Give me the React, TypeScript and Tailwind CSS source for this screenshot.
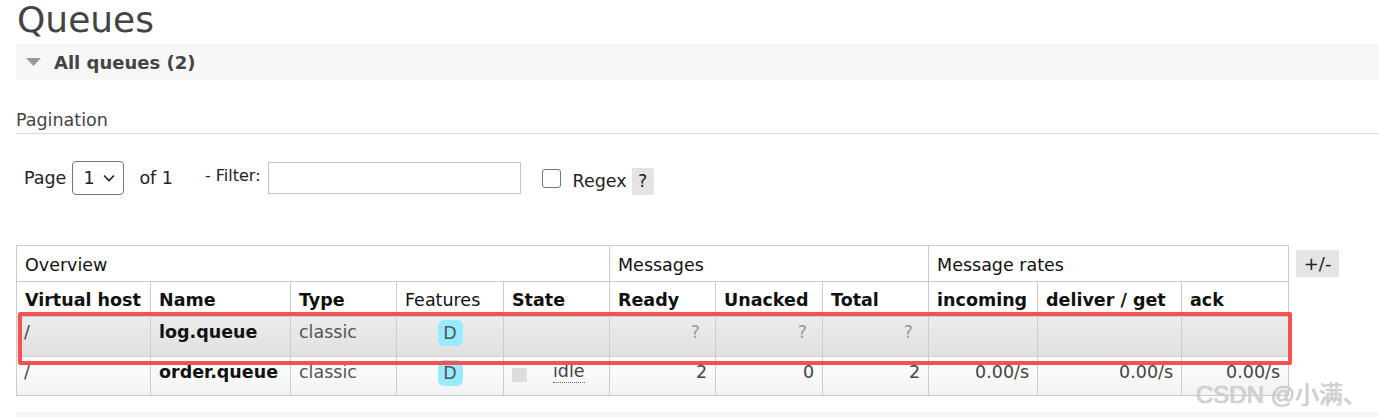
import React from 'react';

const cols = [134, 140, 106, 107, 106, 106, 107, 106, 109, 144, 107];

const Badge = () => (
  <span className="inline-flex h-[26px] w-[25px] items-center justify-center rounded-[6px] bg-[#99ebff] text-[#555]">D</span>
);

const App = () => {
  return (
    <div className="relative h-[417px] w-[1379px] overflow-hidden bg-white pl-4 font-['DejaVu_Sans',sans-serif] text-[17.5px] text-[#222]">
      <h1 className="h-[44px] pl-[1px] text-[36px] leading-[40px] font-normal text-[#444]">Queues</h1>

      <div className="flex h-[36px] items-center bg-[#f7f7f7]">
        <svg width="15" height="8" viewBox="0 0 15 8" className="ml-[10px]">
          <polygon points="0,0 15,0 7.5,8" fill="#999" />
        </svg>
        <span className="ml-[13px] mt-[1px] text-[18px] font-bold text-[#444]">All queues (2)</span>
      </div>

      <div className="flex h-[54px] items-end border-b border-[#dddddd] pb-[1px]">
        <span className="leading-[24px] text-[#444]">Pagination</span>
      </div>

      <div className="mt-[27px] flex h-[34px] items-center text-[17.5px] text-[#222]">
        <span className="ml-2">Page</span>
        <div className="ml-[6px] flex h-[34px] w-[52px] items-center rounded-[4px] border border-[#767676] pl-[10px]">
          <span>1</span>
          <svg width="12" height="8" viewBox="0 0 12 8" className="ml-[8px]">
            <path d="M1 1.5 L6 6.5 L11 1.5" fill="none" stroke="#222" strokeWidth="1.6" />
          </svg>
        </div>
        <span className="ml-[15px]">of 1</span>
        <span className="ml-[32px] -mt-[4px] text-[16px]">- Filter:</span>
        <div className="ml-[7px] h-[32px] w-[253px] border border-[#c4c4c4]" />
        <div className="ml-[21px] h-[19px] w-[19px] rounded-[3px] border border-[#767676]" />
        <span className="ml-[12px] mt-[6px]">Regex</span>
        <span className="ml-[5px] mt-[6px] flex h-[27px] w-[22px] items-center justify-center bg-[#e4e4e4]">?</span>
      </div>

      <div className="mt-[50px] flex items-start gap-[7px]">
        <table className="table-fixed border-collapse border border-[#cccccc]" style={{ width: 1272 }}>
          <colgroup>
            {cols.map((w, i) => (
              <col key={i} style={{ width: w }} />
            ))}
          </colgroup>
          <thead>
            <tr className="h-[36px]">
              <th colSpan={5} className="border border-[#cccccc] px-2 pt-[3px] text-left font-normal text-[#111]">Overview</th>
              <th colSpan={3} className="border border-[#cccccc] px-2 pt-[3px] text-left font-normal text-[#111]">Messages</th>
              <th colSpan={3} className="border border-[#cccccc] px-2 pt-[3px] text-left font-normal text-[#111]">Message rates</th>
            </tr>
            <tr className="h-[35px] text-left font-bold text-[#111] [&>th]:pt-[3px]">
              <th className="border border-[#cccccc] px-2">Virtual host</th>
              <th className="border border-[#cccccc] px-2">Name</th>
              <th className="border border-[#cccccc] px-2">Type</th>
              <th className="border border-[#cccccc] px-2 font-normal">Features</th>
              <th className="border border-[#cccccc] px-2">State</th>
              <th className="border border-[#cccccc] px-2">Ready</th>
              <th className="border border-[#cccccc] px-2">Unacked</th>
              <th className="border border-[#cccccc] px-2">Total</th>
              <th className="border border-[#cccccc] px-2">incoming</th>
              <th className="border border-[#cccccc] px-2">deliver / get</th>
              <th className="border border-[#cccccc] px-2">ack</th>
            </tr>
          </thead>
          <tbody className="align-top leading-[24px]">
            <tr className="h-[40px] bg-gradient-to-b from-[#ececec] to-[#e0e0e0]">
              <td className="border border-[#cccccc] pl-[7px] pt-[3px] text-[#444]">/</td>
              <td className="border border-[#cccccc] px-2 pt-[3px] font-bold text-[#111]">log.queue</td>
              <td className="border border-[#cccccc] px-2 pt-[3px] text-[#555]">classic</td>
              <td className="border border-[#cccccc] pt-[3px] text-center"><Badge /></td>
              <td className="border border-[#cccccc] px-2 pt-[3px]" />
              <td className="border border-[#cccccc] pr-[15px] pt-[3px] text-right text-[#999]">?</td>
              <td className="border border-[#cccccc] pr-[15px] pt-[3px] text-right text-[#999]">?</td>
              <td className="border border-[#cccccc] pr-[15px] pt-[3px] text-right text-[#999]">?</td>
              <td className="border border-[#cccccc]" />
              <td className="border border-[#cccccc]" />
              <td className="border border-[#cccccc]" />
            </tr>
            <tr className="h-[39px] bg-gradient-to-b from-white to-[#f2f2f2]">
              <td className="border border-[#cccccc] pl-[7px] pt-[3px] text-[#444]">/</td>
              <td className="border border-[#cccccc] px-2 pt-[3px] font-bold text-[#111]">order.queue</td>
              <td className="border border-[#cccccc] px-2 pt-[3px] text-[#555]">classic</td>
              <td className="border border-[#cccccc] pt-[3px] text-center"><Badge /></td>
              <td className="border border-[#cccccc] px-2 pt-[3px]">
                <div className="flex items-center">
                  <span className="mt-[7px] h-[14px] w-[15px] bg-[#dddddd]" />
                  <span className="ml-[26px] border-b border-dotted border-[#666] leading-[22px] text-[#444]">idle</span>
                </div>
              </td>
              <td className="border border-[#cccccc] pr-2 pt-[3px] text-right text-[#444]">2</td>
              <td className="border border-[#cccccc] pr-2 pt-[3px] text-right text-[#444]">0</td>
              <td className="border border-[#cccccc] pr-2 pt-[3px] text-right text-[#444]">2</td>
              <td className="border border-[#cccccc] pr-2 pt-[3px] text-right text-[#444]">0.00/s</td>
              <td className="border border-[#cccccc] pr-2 pt-[3px] text-right text-[#444]">0.00/s</td>
              <td className="border border-[#cccccc] pr-2 pt-[3px] text-right text-[#444]">0.00/s</td>
            </tr>
          </tbody>
        </table>
        <span className="mt-[5px] flex h-[27px] w-[43px] items-center justify-center bg-[#e4e4e4] text-[18px] text-[#222]">+/-</span>
      </div>

      <div className="mt-4 h-[10px] bg-[#f7f7f7]" />

      <div className="absolute left-[18px] top-[312px] h-[53px] w-[1274px] rounded-[2px] border-[4px] border-[#f55151]" />

      <div className="absolute left-[1196px] top-[377px] font-['Liberation_Sans','Noto_Sans_CJK_SC',sans-serif] text-[24px] text-[#d4d4d4] [text-shadow:0_0_1px_#999]">
        CSDN @小满、
      </div>
    </div>
  );
};

export default App;
